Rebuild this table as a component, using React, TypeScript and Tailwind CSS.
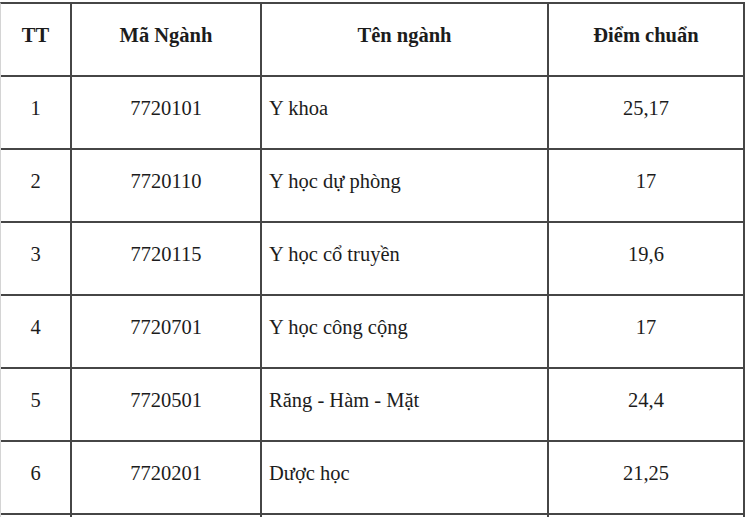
const rows = [
  ["1", "7720101", "Y khoa", "25,17"],
  ["2", "7720110", "Y học dự phòng", "17"],
  ["3", "7720115", "Y học cổ truyền", "19,6"],
  ["4", "7720701", "Y học công cộng", "17"],
  ["5", "7720501", "Răng - Hàm - Mặt", "24,4"],
  ["6", "7720201", "Dược học", "21,25"],
  ["7", "", "", ""],
];

const cell = "flex h-[73px] items-center border-b-2 border-r-2 border-[#464646] pb-2";

export default function App() {
  return (
    <div className="h-[517px] overflow-hidden bg-white pt-[2px] [font-family:Liberation_Serif,serif] text-[20.5px] text-[#1c1c1c]">
      <div className="grid w-[745px] grid-cols-[71px_190px_287px_196px] border-l border-t-2 border-l-[#d4d4d4] border-t-[#464646]">
        <div className={`${cell} justify-center font-bold`}>TT</div>
        <div className={`${cell} justify-center font-bold`}>Mã Ngành</div>
        <div className={`${cell} justify-center font-bold`}>Tên ngành</div>
        <div className={`${cell} justify-center font-bold`}>Điểm chuẩn</div>
        {rows.map(([tt, code, name, score]) => (
          <div key={tt} className="contents">
            <div className={`${cell} justify-center`}>{code && tt}</div>
            <div className={`${cell} justify-center`}>{code}</div>
            <div className={`${cell} pl-[7px]`}>{name}</div>
            <div className={`${cell} justify-center`}>{score}</div>
          </div>
        ))}
      </div>
    </div>
  );
}
